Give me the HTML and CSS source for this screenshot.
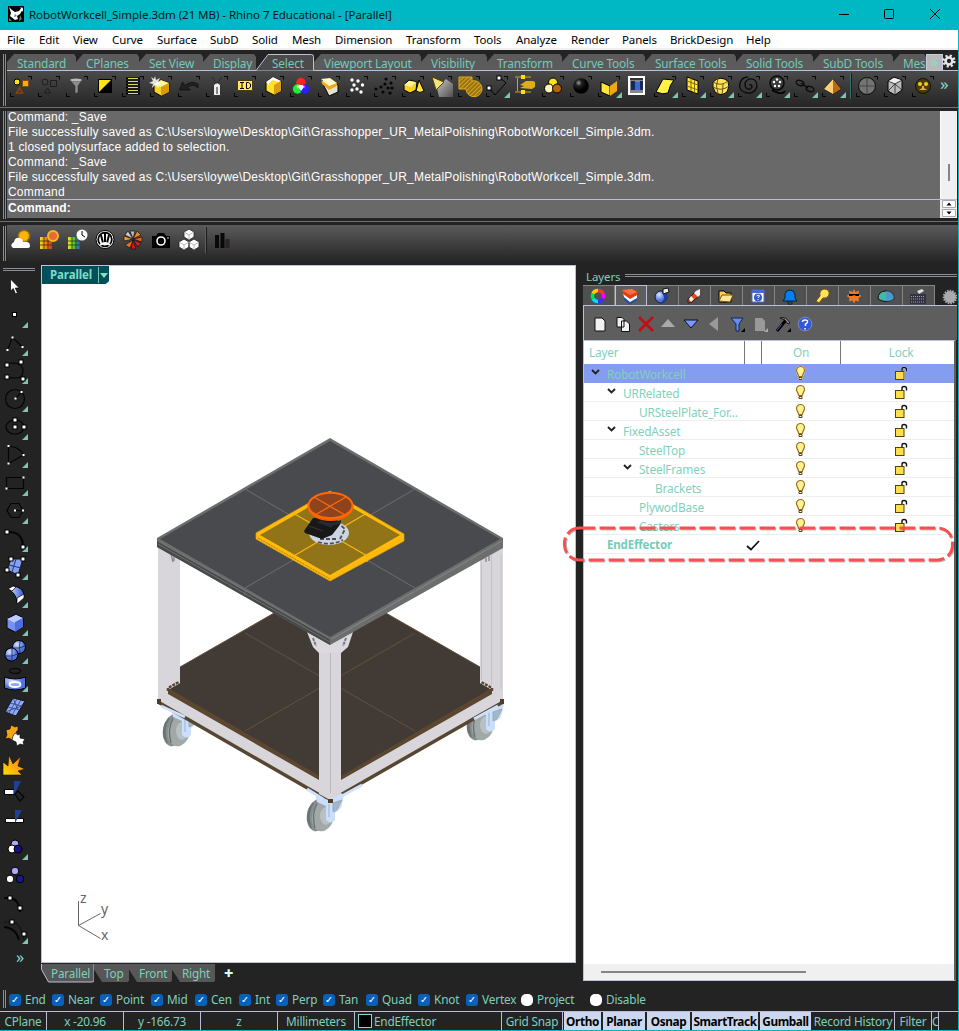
FILE: index.html
```html
<!DOCTYPE html>
<html lang="en">
<head>
<meta charset="utf-8">
<title>RobotWorkcell_Simple.3dm - Rhino 7</title>
<link rel="stylesheet" href="styles.css">
</head>
<body>
<svg class="defs" width="0" height="0">
  <defs>
    <linearGradient id="gSpot" x1="0" y1="0" x2="1" y2="1"><stop offset="0" stop-color="#ddd"/><stop offset="1" stop-color="#555"/></linearGradient>
    <linearGradient id="gBlue" x1="0" y1="0" x2="1" y2="0"><stop offset="0" stop-color="#dfe8ff"/><stop offset="1" stop-color="#3358d0"/></linearGradient>
    <radialGradient id="gBall" cx=".35" cy=".3"><stop offset="0" stop-color="#999"/><stop offset=".4" stop-color="#222"/><stop offset="1" stop-color="#000"/></radialGradient>
    <radialGradient id="gBb" cx=".35" cy=".3"><stop offset="0" stop-color="#dbe5ff"/><stop offset="1" stop-color="#5072de"/></radialGradient>
    <linearGradient id="gFire" x1="0" y1="1" x2="1" y2="0"><stop offset="0" stop-color="#ffe000"/><stop offset=".6" stop-color="#ff9a10"/><stop offset="1" stop-color="#d33b00"/></linearGradient>
    <linearGradient id="gRed" x1="0" y1="0" x2="1" y2="0"><stop offset="0" stop-color="#f5dc20"/><stop offset="1" stop-color="#e03010"/></linearGradient>
    <linearGradient id="gRain" x1="0" y1="0" x2="1" y2="0"><stop offset="0" stop-color="#f4e820"/><stop offset=".5" stop-color="#52c23a"/><stop offset="1" stop-color="#2850d8"/></linearGradient>
    <pattern id="hatch" width="3" height="3" patternUnits="userSpaceOnUse" patternTransform="rotate(45)"><rect width="3" height="3" fill="#8b6a14"/><rect width="1.300" height="3" fill="#d8a417"/></pattern>
    <g id="marks"><path d="M21 4.500h3.500v3" fill="none" stroke="#050505"/><path d="M3.500 21v3.500h3.500" fill="none" stroke="#050505"/></g>
    <path id="tri" d="M27 20v6h-6z" fill="#7cc4b4"/>
    <path id="ltri" d="M28 22v6h-6z" fill="#7cc4b4"/>
    <rect id="sq" x="-2" y="-2" width="4" height="4" fill="#fff" stroke="#000"/>
    <rect id="pt" x="-1" y="-1" width="2" height="2" fill="#fff"/>
    <g id="ycube"><path d="M7 12l7-4 8 3v9l-8 4-7-4z" fill="#f5d327" stroke="#000"/><path d="M7 12l7-4 8 3-8 4z" fill="#fff59a"/><path d="M14 15l8-4v9l-8 4z" fill="#d89a13"/></g>
    <g id="bulb"><path d="M6 12.500h3v2h-3z" fill="#fff" stroke="#5c4412"/><path d="M7.500 1.500a4 4 0 0 1 4 4c0 2-1.700 3-2.200 6h-3.600c-.5-3-2.200-4-2.200-6a4 4 0 0 1 4-4z" fill="#fdf393" stroke="#9a6e18" stroke-width="1.200"/></g>
    <g id="lock"><path d="M8 6v-3q0-1.500 2-1.500 2.500 0 2.500 2v2" fill="none" stroke="#111" stroke-width="1.400"/><rect x="1.500" y="5.500" width="8.500" height="8" fill="#fbe04a" stroke="#54400a"/></g>
    <path id="chev" d="M1 3l3.500 3.500L8 3" fill="none" stroke="#222" stroke-width="1.900"/>
    <g id="cast">
      <ellipse cx="-8" cy="6" rx="11" ry="16.500" transform="rotate(12 -8 6)" fill="#858d8e"/>
      <ellipse cx="-3" cy="7" rx="11" ry="15.500" transform="rotate(12 -3 7)" fill="#a0a8a8"/>
      <path d="M-13-6q-7 11-2 25M-16-2q-4 9-1 17M-9-5q-6 10-2 24" stroke="#6a7274" fill="none" stroke-width="1.400"/>
      <ellipse cx="0" cy="7" rx="6" ry="9" fill="#b7c0c2"/>
      <path d="M-11-15l13 6 13-7 3 2-3 13-6 5v7q-4 5-9 0V-3l-9-4z" fill="#cbdffa"/>
      <path d="M3-5v13M7-6l9-3-5 10-4 2z" stroke="#8fa5bd" fill="#a5b6c6" stroke-width=".8"/>
    </g>
  </defs>
</svg>
<div class="window">
  <header class="title">
    <svg width="16" height="16" viewBox="0 0 16 16"><path d="M0 0h16v16H0z"/><path d="M1 1l2 6-1 3 5 4 3-1-1-3 3-2 3-5-1-2-3 4-4 1-3-2z" fill="#fff"/><path d="M7 8l2 2-3 1zM12 9l2 4-3 2zM1 12l3 3H1z" fill="#777"/><path d="M12 1l3 2v3z" fill="#fff"/></svg>
    <span class="caption">RobotWorkcell_Simple.3dm (21 MB) - Rhino 7 Educational - [Parallel]</span>
    <svg width="110" height="12" viewBox="0 0 110 12" fill="none" stroke="#000"><path d="M1 6.500h10"/><rect x="46.500" y="1.500" width="9" height="9" rx="1"/><path d="M92 1l10 10M102 1l-10 10"/></svg>
  </header>
  <nav class="menu"><span>File</span><span>Edit</span><span>View</span><span>Curve</span><span>Surface</span><span>SubD</span><span>Solid</span><span>Mesh</span><span>Dimension</span><span>Transform</span><span>Tools</span><span>Analyze</span><span>Render</span><span>Panels</span><span>BrickDesign</span><span>Help</span></nav>

  <section class="ribbon">
    <i class="grip"></i>
    <div class="ribbon-body">
      <div class="tabs">
        <span>Standard</span><span>CPlanes</span><span>Set View</span><span>Display</span><span class="sel"><svg width="60" height="17" viewBox="0 0 60 17"><path d="M0 16.500L12 .5h43.500q2 0 2 2v14" fill="#4b4b4b" stroke="#b9bfdc"/></svg><b>Select</b></span><span>Viewport Layout</span><span>Visibility</span><span>Transform</span><span>Curve Tools</span><span>Surface Tools</span><span>Solid Tools</span><span>SubD Tools</span><span>Mes</span><em>»</em>
        <svg class="gear" width="14" height="14" viewBox="0 0 14 14"><circle cx="7" cy="7" r="5.300" fill="none" stroke="#e8e8e8" stroke-width="2.600" stroke-dasharray="2.100 2.060"/><circle cx="7" cy="7" r="3.400" fill="none" stroke="#e8e8e8" stroke-width="2.500"/></svg>
      </div>
      <div class="tools">
        <svg viewBox="0 0 28 28"><use href="#marks"/><circle cx="10" cy="10" r="3" fill="#ffe414" stroke="#000"/><path d="M15.500 8.500h6v6h-6z" fill="#f0b010" stroke="#8a4a08"/><path d="M9.500 21l3-5 3 5z" fill="none" stroke="#8a440e" stroke-width="1.500"/></svg>
        <svg viewBox="0 0 28 28"><use href="#marks"/><g fill="none" stroke="#1d1d1d"><circle cx="10" cy="10" r="3"/><path d="M15.500 8.500h6v6h-6zM9.500 21l3-5 3 5z"/></g></svg>
        <svg viewBox="0 0 28 28"><use href="#marks"/><path d="M7 8q6 3 12 0l-4 6v7h-3v-7z" fill="#8d8d8d" stroke="#333" stroke-width=".6"/><ellipse cx="13" cy="8" rx="6" ry="1.500" fill="#bbb"/></svg>
        <svg viewBox="0 0 28 28"><use href="#marks"/><path d="M7.500 7.500h13v13h-13z" fill="#ffe414" stroke="#000"/><path d="M21 7v14H7z"/></svg>
        <svg viewBox="0 0 28 28"><use href="#marks"/><path d="M7 6.500h14M7 9.500h14M7 12.500h14M7 15.500h14M7 18.500h14M7 21.500h14" stroke="#000" stroke-width="2"/><path d="M9 6.500h10M9 12.500h10M9 18.500h10" stroke="#e8d44a"/><path d="M9 9.500h10M9 15.500h10M9 21.500h10" stroke="#ccc"/></svg>
        <svg viewBox="0 0 28 28"><use href="#marks"/><use href="#ycube"/><path d="M8 4l1 4 4-2-2 4 4 1-4 1 1 4-4-3-3 3 1-4-4-1 4-2-2-4 3 2z" fill="#fff" opacity=".85"/></svg>
        <svg viewBox="0 0 28 28"><use href="#marks"/><path d="M4.500 18l3-8 2.500 3.500q6-5.500 13-1.500v4q-5-5-10.500-.5l3 2.500z" fill="#222" stroke="#080808" stroke-width=".6"/></svg>
        <svg viewBox="0 0 28 28"><use href="#marks"/><path d="M10.500 13l3.500-3 3.500 3v10.500h-7z" fill="#eee" stroke="#333"/><path d="M9 5l5 7 5-7" fill="none" stroke="#111" stroke-dasharray="1 1"/><path d="M13 15h2v7h-2z" fill="#888"/></svg>
        <svg viewBox="0 0 28 28"><use href="#marks"/><path d="M6.500 8.500h15v10h-15z" fill="#ffe85a" stroke="#4b3d08"/><path d="M9 10.500h4M11 10.500v6M9 16.500h4M15.500 10.500v6h2l2-1.500v-3l-2-1.500z" fill="none" stroke="#000"/></svg>
        <svg viewBox="0 0 28 28"><use href="#marks"/><path d="M7 10l7-5 8 4v10l-7 4-8-4z" fill="#ffe02c" stroke="#000"/><path d="M7 10l7-5 8 4-3 1-5-2-4 3v2z" fill="#fff"/><path d="M15 13l7-4v10l-7 4z" fill="#d99b12"/></svg>
        <svg viewBox="0 0 28 28"><use href="#marks"/><circle cx="14" cy="10.500" r="4.700" fill="#f22"/><circle cx="10.500" cy="17" r="4.700" fill="#2e3"/><circle cx="17.500" cy="17" r="4.700" fill="#22f"/><path d="M11.500 13l-2 1 1 3z" fill="#fe2"/><path d="M16.500 13l2 1-1 3z" fill="#f2f"/><path d="M12 13h4l1 2-3 4-3-4z" fill="#fff"/></svg>
        <svg viewBox="0 0 28 28"><use href="#marks"/><path d="M6 8l14 2 3 3v7l-9 4z" fill="#e7e1cf" stroke="#000"/><path d="M6 7l9-1 7 5-8 3z" fill="#fff6c9"/><path d="M6 8l8 6 8-3v3l-8 4-7-6z" fill="#f1a91c"/></svg>
        <svg viewBox="0 0 28 28"><use href="#marks"/><g fill="#fff"><circle cx="9" cy="8" r="1.700"/><circle cx="15" cy="9" r="1.700"/><circle cx="11" cy="13" r="1.700"/><circle cx="19.500" cy="13" r="1.700"/><circle cx="9" cy="18" r="1.700"/><circle cx="14" cy="17" r="1.700"/><circle cx="18" cy="20" r="1.700"/></g></svg>
        <svg viewBox="0 0 28 28"><use href="#marks"/><g fill="#050505"><circle cx="15" cy="7" r="1.600"/><circle cx="20" cy="11" r="1.600"/><circle cx="14" cy="12" r="1.600"/><circle cx="10" cy="15" r="1.600"/><circle cx="5" cy="17" r="1.600"/><circle cx="17" cy="16" r="1.600"/><circle cx="21" cy="16" r="1.600"/><circle cx="12" cy="20" r="1.600"/><circle cx="19" cy="21" r="1.600"/></g></svg>
        <svg viewBox="0 0 28 28"><use href="#marks"/><path d="M5 13l5-5 8 2-1 8-6 3-6-3z" fill="#f7cf27" stroke="#000"/><path d="M5 13l5-4 7 1-5 5z" fill="#fff49a"/><path d="M20 8l5 11q-4 3-8 0z" fill="#ffe43c" stroke="#000"/></svg>
        <svg viewBox="0 0 28 28"><use href="#marks"/><path d="M10 16l9-9 7 5v13H12z" fill="url(#gSpot)" opacity=".85"/><path d="M5 5l12 5-8 8z" fill="#f4e27a" stroke="#554000"/></svg>
        <svg viewBox="0 0 28 28"><use href="#marks"/><path d="M4 5h13v4a8 8 0 1 1-6 8H4z" fill="url(#hatch)" stroke="#e4ac16"/></svg>
        <svg viewBox="0 0 28 28"><use href="#marks"/><path d="M6 16l6 7 11-12-7-6" fill="none" stroke="#050505"/><use href="#sq" x="16" y="6"/><use href="#sq" x="6" y="16"/><use href="#tri"/></svg>
        <svg viewBox="0 0 28 28"><path d="M4 5h16M4 20h16M6.500 6v13" stroke="#d6a315"/><path d="M10 3h4v4h-4zM10 18h4v4h-4z" fill="#ffdc20"/><path d="M9 13l6-4h7l2 1v5l-3 2-12-1 4-2z" fill="#dfac1a"/></svg>
        <svg viewBox="0 0 28 28"><use href="#marks"/><circle cx="14" cy="10.500" r="4.500" fill="#ffe312" stroke="#000"/><circle cx="10" cy="16.500" r="4.500" fill="#fff5bb" stroke="#000"/><circle cx="18" cy="16.500" r="4.500" fill="#b46509" stroke="#000"/></svg>
        <svg viewBox="0 0 28 28"><use href="#marks"/><circle cx="14" cy="14" r="7.800" fill="url(#gBall)"/></svg>
        <svg viewBox="0 0 28 28"><use href="#marks"/><path d="M6 10l9 4v10l-9-4z" fill="#ffe43a" stroke="#000"/><path d="M15 14l7-5v10l-7 5z" fill="#f2a713"/><use href="#tri"/></svg>
        <svg viewBox="0 0 28 28"><path d="M6 5h15v17H6z" fill="#888" stroke="#fff" stroke-width="2"/><path d="M9 10h9v8H9z" fill="#376bd0"/><path d="M8 9h4v9H8zM17 9h3v9h-3z" fill="#16265e"/><path d="M7 6h13v2H7z" fill="#333"/></svg>
        <svg viewBox="0 0 28 28"><use href="#marks"/><path d="M5 20l7-13 11 1q-4 4-6 13-5 2-12-1z" fill="#fff04b" stroke="#000"/><use href="#tri"/></svg>
        <svg viewBox="0 0 28 28"><use href="#marks"/><path d="M8 5l11 4v13L8 18z" fill="#ffea35" stroke="#000"/><path d="M8 9l11 4M8 14l11 4M12 6v13M15.500 8v13" stroke="#836612"/><use href="#tri"/></svg>
        <svg viewBox="0 0 28 28"><use href="#marks"/><path d="M6 10q7-7 15-1 2 6-1 11-6 5-12 0-3-5-2-10z" fill="#fae25a" stroke="#000"/><path d="M6 10q8 5 15-1M6 15q8 5 16-1M11 6q-3 8 0 16M16 12q0 5-1 10" fill="none" stroke="#715611"/><use href="#tri"/></svg>
        <svg viewBox="0 0 28 28"><use href="#marks"/><path d="M14 13q3-1 3 2-2 4-6 1-3-6 3-9 8-1 8 7-2 8-10 7-9-2-7-10 2-6 8-6" fill="none" stroke="#0a0a0a" stroke-width="1.300"/><use href="#tri"/></svg>
        <svg viewBox="0 0 28 28"><use href="#marks"/><circle cx="14" cy="11" r="7" fill="none" stroke="#080808" stroke-width="1.500"/><g fill="#fff"><circle cx="14" cy="7.500" r="1.200"/><circle cx="11" cy="10" r="1.200"/><circle cx="17" cy="10" r="1.200"/><circle cx="12" cy="14" r="1.200"/><circle cx="16" cy="14" r="1.200"/></g><path d="M9 18q10 6 13 1" fill="none" stroke="#000" stroke-width="1.500"/><use href="#tri"/></svg>
        <svg viewBox="0 0 28 28"><use href="#marks"/><g fill="none" stroke="#0a0a0a" stroke-width="1.300"><ellipse cx="9" cy="11" rx="4" ry="2.500" transform="rotate(20 9 11)"/><path d="M10 11l7 5"/><ellipse cx="19" cy="17" rx="4" ry="2.500" transform="rotate(20 19 17)"/></g><use href="#tri"/></svg>
        <svg viewBox="0 0 28 28"><use href="#marks"/><path d="M5 17l9-10 8 10-8 5z" fill="#f3c055" stroke="#000"/><path d="M14 7l8 10-8 5z" fill="#b96a18"/><path d="M5 17l9-10v15z" fill="#ffce78"/><use href="#tri"/></svg>
        <i class="vsep"></i>
        <svg viewBox="0 0 28 28"><use href="#marks"/><circle cx="14" cy="14" r="8.500" fill="#747474" stroke="#050505"/><path d="M14 5.500v17M5.500 14h17" stroke="#444"/></svg>
        <svg viewBox="0 0 28 28"><use href="#marks"/><path d="M7 9l6-4 8 3v10l-7 5-7-4z" fill="#bbb" stroke="#000"/><path d="M7 9l7 3 7-4M14 12v11M7 19l7-7 7 6" fill="none" stroke="#222" stroke-width=".8"/><path d="M8 9l5-3 7 2-6 3z" fill="#eee"/></svg>
        <svg viewBox="0 0 28 28"><use href="#marks"/><circle cx="14" cy="14" r="7.500" fill="#4a3b0a" stroke="#111"/><circle cx="11" cy="12" r="2" fill="#f3cf1b"/><circle cx="17" cy="12" r="2" fill="#f3cf1b"/><path d="M13 14h2v2l3 2h-8l3-2z" fill="#e5b716"/></svg>
        <em>»</em>
      </div>
    </div>
  </section>

  <section class="command">
    <i class="grip"></i>
    <div class="history"><p>Command: _Save</p><p>File successfully saved as C:\Users\loywe\Desktop\Git\Grasshopper_UR_MetalPolishing\RobotWorkcell_Simple.3dm.</p><p>1 closed polysurface added to selection.</p><p>Command: _Save</p><p>File successfully saved as C:\Users\loywe\Desktop\Git\Grasshopper_UR_MetalPolishing\RobotWorkcell_Simple.3dm.</p><p>Command</p></div>
    <div class="track"><i></i></div>
    <div class="prompt">Command:</div>
    <div class="spin"><svg width="14" height="18" viewBox="0 0 14 18"><path d="M.5.500h13v7H.5zM.5 9.500h13v7H.5z" fill="#fff" stroke="#aaa"/><path d="M4.500 5.500l2.500-3 2.500 3zM4.500 11.500l2.500 3 2.500-3z"/></svg></div>
  </section>

  <section class="toolbar2">
    <i class="grip"></i>
    <div class="tools">
      <svg viewBox="0 0 28 28"><circle cx="17" cy="10" r="5.500" fill="#ffb400" stroke="#a67000" stroke-dasharray="1 1" stroke-width="2"/><path d="M6 22q-4-3 1-6 1-5 6-4 3 1 3 4 7-1 7 4 0 2-2 2z" fill="#fff"/></svg>
      <svg viewBox="0 0 28 28"><path d="M5 11h12v12H5z" fill="url(#gRed)"/><path d="M5 15h12M5 19h12M9 11v12M13 11v12" stroke="#4a2a08" stroke-width=".8"/><circle cx="18" cy="10" r="5" fill="#e76b38" stroke="#f2ba22" stroke-width="2"/></svg>
      <svg viewBox="0 0 28 28"><path d="M5 11h12v12H5z" fill="url(#gRain)"/><path d="M5 15h12M5 19h12M9 11v12M13 11v12" stroke="#243c12" stroke-width=".8"/><circle cx="19" cy="9" r="5.500" fill="#fff"/><path d="M19 5v4l3 2" fill="none" stroke="#000"/></svg>
      <svg viewBox="0 0 28 28"><circle cx="14" cy="13.500" r="9" fill="#fff" stroke="#000"/><circle cx="14" cy="13.500" r="6.800" fill="none" stroke="#000" stroke-width="1.800"/><path d="M14 7v10M10 9l2 8M18 9l-2 8" stroke="#000" stroke-width="2"/><path d="M9 19q5-4 10 0" fill="none" stroke="#fff" stroke-width="2"/></svg>
      <svg viewBox="0 0 28 28"><g stroke="#111" stroke-width=".7"><path d="M14 13L11 5h5z" fill="#bbb"/><path d="M14 13l4-8 4 4z" fill="#f28617"/><path d="M14 13l9-2v5z" fill="#f15b12"/><path d="M14 14l8 3-3 4z" fill="#de1f1f"/><path d="M14 14l3 9h-5z" fill="#f20c0c"/><path d="M14 14l-3 8-5-3z" fill="#f26c12"/><path d="M14 13l-9 2v-5z" fill="#f49b38"/><path d="M14 13L6 9l3-4z" fill="#ccc"/></g></svg>
      <svg viewBox="0 0 28 28"><path d="M5 10h4l2-3h6l2 3h4v12H5z"/><circle cx="14" cy="15" r="4" fill="none" stroke="#fff" stroke-width="1.600"/><circle cx="21" cy="12" r=".8" fill="#fff"/></svg>
      <svg viewBox="0 0 28 28"><g fill="#fff" stroke="#222" stroke-width=".8"><path d="M14 3l5 3v5l-5 3-5-3V6zM9 13l5 3v5l-5 3-5-3v-5zM19 13l5 3v5l-5 3-5-3v-5z"/><path d="M9 6l5 3 5-3M14 9v5M4 16l5 3 5-3M9 19v5M14 16l5 3 5-3M19 19v5" fill="none" stroke="#aaa"/></g></svg>
      <i class="vsep"></i>
      <svg viewBox="0 0 28 28"><path d="M7 9h4v13H7zM12.500 7h4v15h-4z" fill="#080808"/><path d="M17.500 13h4v9h-4z" fill="#2a2424"/></svg>
    </div>
  </section>

  <main>
    <aside class="left">
      <i class="hgrip"></i>
      <svg viewBox="0 0 28 28"><path d="M10.500 7v12l2.800-2.500L15.500 22l2-1-2.200-5h4z" fill="#fff" stroke="#000" stroke-width=".7"/></svg>
      <svg viewBox="0 0 28 28"><use href="#sq" x="14.500" y="14.500"/><use href="#ltri"/></svg>
      <svg viewBox="0 0 28 28"><path d="M7.500 22l5-12.500L22.500 19" class="ln"/><use href="#pt" x="7.500" y="22"/><use href="#pt" x="12.500" y="9.500"/><use href="#pt" x="22.500" y="19"/><use href="#ltri"/></svg>
      <svg viewBox="0 0 28 28"><path d="M7 9q0-2 8-2 7 1 8 7 0 8-7 8-9 0-9-1" class="ln"/><use href="#sq" x="7" y="9"/><use href="#sq" x="21" y="6"/><use href="#sq" x="7" y="21"/><use href="#ltri"/><use href="#sq" x="23" y="23"/></svg>
      <svg viewBox="0 0 28 28"><circle cx="15" cy="15" r="9.500" class="ln"/><path d="M15.500 14.500l6-6.500" class="ln"/><use href="#pt" x="15.500" y="14.500"/><use href="#pt" x="21.500" y="8"/><use href="#ltri"/></svg>
      <svg viewBox="0 0 28 28"><ellipse cx="15" cy="15" rx="9" ry="7" class="ln"/><use href="#sq" x="15" y="8"/><use href="#sq" x="15" y="15"/><use href="#sq" x="24" y="15"/><use href="#ltri"/></svg>
      <svg viewBox="0 0 28 28"><path d="M8.500 23.500V6Q20 7 23.500 15z" class="ln"/><use href="#pt" x="8.500" y="6"/><use href="#pt" x="8.500" y="23.500"/><use href="#pt" x="23.500" y="15"/><use href="#ltri"/></svg>
      <svg viewBox="0 0 28 28"><path d="M6.500 9.500h17v11h-17z" class="ln"/><use href="#pt" x="23.500" y="9.500"/><use href="#pt" x="6.500" y="20.500"/><use href="#ltri"/></svg>
      <svg viewBox="0 0 28 28"><path d="M7 14.500l4-7h8l4 7-4 7h-8zM15 14.500h8" class="ln"/><use href="#pt" x="15" y="14.500"/><use href="#pt" x="23" y="14.500"/><use href="#ltri"/></svg>
      <svg viewBox="0 0 28 28"><path d="M7 8q16-1 16 15" class="ln thick"/><use href="#sq" x="7" y="8"/><use href="#ltri"/><use href="#sq" x="23" y="23"/></svg>
      <svg viewBox="0 0 28 28"><path d="M11 7h12l-5 16-11-5z" fill="#86a0f2" stroke="#111"/><path d="M9 13l12 3M16 7l-4 13" stroke="#22357c"/><use href="#sq" x="11" y="7"/><use href="#sq" x="23" y="7"/><use href="#sq" x="7" y="18"/><use href="#sq" x="18" y="23"/><use href="#ltri"/></svg>
      <svg viewBox="0 0 28 28"><path d="M8 9l5-3q9 1 11 8l-7 8q-1-9-9-13z" fill="url(#gBlue)" stroke="#000"/><path d="M8 9l5-3 3 1-4 4zM17 18l7-4v4l-7 6z" fill="#fff" stroke="#000" stroke-width=".7"/><use href="#ltri"/></svg>
      <svg viewBox="0 0 28 28"><path d="M7 11l9-5 7 4v9l-8 5-8-4z" fill="#7590f8" stroke="#000"/><path d="M7 11l9-4 7 3-8 5z" fill="#bccbff"/><path d="M15 14l8-4v9l-8 5z" fill="#4d6ddc"/><use href="#ltri"/></svg>
      <svg viewBox="0 0 28 28"><circle cx="19" cy="11" r="6.500" fill="url(#gBb)" stroke="#000"/><circle cx="11.500" cy="18.500" r="6.500" fill="url(#gBb)" stroke="#000"/><path d="M12 12v13M5 20q6 1 13-2M20 5q-1 6 0 12M13 12q6 1 12-2" fill="none" stroke="#18265b" stroke-width=".8"/><use href="#ltri"/></svg>
      <svg viewBox="0 0 28 28"><ellipse cx="15" cy="7" rx="5.500" ry="2.500" class="ln"/><path d="M4.500 13q10.500 4 21 0v11q-10.500 4-21 0z" fill="url(#gBb)" stroke="#000"/><ellipse cx="15" cy="20.500" rx="5.500" ry="2.500" fill="#8fa8f4" stroke="#fff" stroke-width="1.800"/><use href="#ltri"/></svg>
      <svg viewBox="0 0 28 28"><path d="M13 6l12 3-9 15-11-4z" fill="#91a9f1" stroke="#111"/><path d="M10 11l12 3M8 15l12 3M17 7L9 21M21 8l-9 15M13 6l5 12M5 20l17-6" stroke="#30458d" fill="none" stroke-width=".8"/><use href="#ltri"/></svg>
      <svg viewBox="0 0 28 28"><path d="M6 10l4-1 1-4 4 2 3-1v4l-2 2 2 3-4 1-2 4-3-2-4 1 2-4z" fill="#f9a512" stroke="#000" stroke-width=".6"/><path d="M13 16l2-3 3 2 2-1v4l5 1-2 3 1 3-4-1-3 2-1-4-4-2z" fill="#fff" stroke="#000" stroke-width=".6"/></svg>
      <svg viewBox="0 0 28 28"><path d="M3 27V14l5 4 1-11 4 9L21 8l-3 10 7 3-7 2 4 4z" fill="url(#gFire)" stroke="#111" stroke-width=".6"/></svg>
      <svg viewBox="0 0 28 28"><path d="M4.500 13.500H14v5H4.500z" fill="#fff" stroke="#000"/><path d="M14 5h7l-7 14z" fill="#213f94"/><path d="M15 18l3-3 6 6-4 4z" class="ln"/></svg>
      <svg viewBox="0 0 28 28"><path d="M5.500 14.500h18v4h-18z" fill="#fff" stroke="#000"/><path d="M15 6h7l-7 13z" fill="#213f94"/></svg>
      <svg viewBox="0 0 28 28" stroke="#000"><circle cx="15" cy="12" r="4" fill="#aaa9fa"/><circle cx="12" cy="17" r="4" fill="#fff"/><circle cx="18" cy="17" r="4" fill="#151282"/><path d="M28 22v6h-6z" fill="#7cc4b4" stroke="none"/></svg>
      <svg viewBox="0 0 28 28" stroke="#000"><circle cx="15" cy="11" r="3.800" fill="#aaa9fa"/><circle cx="10" cy="19" r="3.800" fill="#fff"/><circle cx="20" cy="19" r="3.800" fill="#1b1889"/></svg>
      <svg viewBox="0 0 28 28"><path d="M4 10h6q9 1 10 14" class="ln thick"/><use href="#sq" x="10" y="10"/><use href="#sq" x="20" y="20"/></svg>
      <svg viewBox="0 0 28 28"><path d="M4 11q12 1 15 13" class="ln thick"/><path d="M4 6h8q9 1 12 18" class="ln" stroke-dasharray="1 1"/><use href="#sq" x="12" y="6"/><use href="#sq" x="24" y="18"/><use href="#ltri"/></svg>
      <em>»</em>
    </aside>

    <section class="view">
      <div class="canvas">
        <div class="vlabel"><b>Parallel</b><svg width="11" height="18" viewBox="0 0 11 18"><path d="M.5 1v16" stroke="#7cc4b4"/><path d="M2 7h8l-4 5z" fill="#8fdcca"/></svg></div>
        <svg class="scene" width="533" height="696" viewBox="42 266 533 696">
          <use href="#cast" x="182" y="724"/><use href="#cast" x="486" y="718"/>
          <path d="M330 581L480 667v16l12 7L330 791 168 690l12-7v-16z" fill="#423a35"/>
          <path d="M158 545h22v138l-12 6v12h-10zM480 545h23v155h-11v-12l-12-6z" fill="#d9d6db"/>
          <path d="M491.500 555v130M481.500 562v118M501 555v145" stroke="#c3c0c6"/>
          <path d="M180 667L330 581 480 667M245 633l170 98M415 633L245 731" stroke="#66503a" fill="none"/>
          <path d="M168 688L320 776v7l-152-88zM492 688L341 776v7l151-88z" fill="#5b4630"/>
          <path d="M168 691v-3l11-6M492 691v-3l-11-6" fill="none" stroke="#5b4630" stroke-width="2.500" stroke-dasharray="3 1"/>
          <path d="M168 694l151 86h22l151-86 11-6v12L330 800 158 700v-12z" fill="#d9d6db"/>
          <path d="M158 702L330 801 503 702" fill="none" stroke="#564632" stroke-width="3.500"/>
          <path d="M157 699h4v5h-4zM500 699h4v5h-4z" fill="#4d3d2b"/>
          <use href="#cast" x="326" y="809"/>
          <path d="M161 706l24 11M498 706l-24 13M307 789l16 10M362 785l-24 13" stroke="#cfe1fb" stroke-width="3"/>
          <path d="M319 640h22v153l-11 7-11-6z" fill="#d9d6db"/><path d="M330.500 646v147" stroke="#bab7bd"/><path d="M328 799h5v4h-5z" fill="#4d3d2b"/>
          <path d="M307 632l23 12 23-12-5 15-7 6h-22l-6-6z" fill="#dbd9de"/><path d="M313 638l3 8M346 638l-3 8" stroke="#777" stroke-width="2" stroke-dasharray="3 1"/>
          <path d="M171 554l2 8M174 556v5M489 556v5M486 558v4" fill="none" stroke="#8e8b91" stroke-width="1.500"/>
          <path d="M330 438L503 538v10L330 645 157 547v-9z" fill="#6c6e6e"/>
          <path d="M330 441L500 539 330 637 160 539z" fill="#494a4e"/>
          <path d="M157 541l173 98v6L157 547z" fill="#484a4a"/><path d="M158 541l172 98M158 544l172 98" stroke="#777a77" stroke-width=".8"/><path d="M332 639l170-98" stroke="#888" stroke-width="1"/>
          <path d="M245 489l170 99v7M415 489L245 588v7" fill="none" stroke="#6b6e70"/>
          <path d="M330 491L404 534v7L330 581 256 539v-6z" fill="#ffba0b" stroke="#e7a008" stroke-width=".7"/>
          <path d="M330 495L400 535 330 575 260 535z" fill="#927418"/><path d="M293 513l76 44M367 513l-75 44M293 560l-1-4M367 562v-4" stroke="#f7b811" stroke-width="1.200"/>
          <path d="M258 538l72 41" stroke="#a77d13" stroke-dasharray="2 1"/>
          <ellipse cx="329" cy="533" rx="20" ry="12" fill="#cdd5e2"/><path d="M318 542q13 4 25-2M337 522l8 7-5 10M320 539h18" fill="none" stroke="#4b4e55" stroke-width="1.800" stroke-dasharray="4 2"/>
          <path d="M304 531l9-13 16-1 12 5-2 4-7 9-10 4-17-6z" fill="#181818"/><path d="M309 526l14 5M318 522l14 5" stroke="#333" stroke-width="1.200"/>
          <path d="M320 520q10 5 21 0v3q-10 6-21 0z" fill="#2a2a2a"/>
          <ellipse cx="330.500" cy="507" rx="23" ry="14" fill="#ef6006"/><ellipse cx="330.500" cy="505.500" rx="22" ry="12.700" fill="#8d431d" stroke="#ff6808" stroke-width="2"/>
          <path d="M314 497l31 18M346 497l-31 18" stroke="#ff6808" stroke-width="1.300"/>
          <path d="M78.500 901v24.500l22 13M78.500 925.500l22-12" fill="none" stroke="#666"/>
          <g class="axis"><text x="80" y="903">z</text><text x="101" y="914">y</text><text x="101" y="940">x</text></g>
        </svg>
      </div>
      <div class="vtabs"><span class="sel"><svg width="53" height="19" viewBox="0 0 53 19"><path d="M.5 0v5.500l7 12.500h44q1.500 0 1.500-2V0" fill="#575757" stroke="#bcc0dc"/></svg><b>Parallel</b></span><span>Top</span><span>Front</span><span>Right</span><strong>+</strong></div>
    </section>

    <section class="panel">
      <h2>Layers<i></i></h2>
      <div class="ptabs">
        <span><svg viewBox="0 0 20 20"><g fill="none" stroke-width="3.500"><path d="M10 4.500a5.500 5.500 0 0 1 5 3" stroke="#f33"/><path d="M15 7.500a5.500 5.500 0 0 1 0 5" stroke="#f0f"/><path d="M15 12.500a5.500 5.500 0 0 1-5 3" stroke="#33f"/><path d="M10 15.500a5.500 5.500 0 0 1-5-3" stroke="#0df"/><path d="M5 12.500a5.500 5.500 0 0 1 0-5" stroke="#0e3"/><path d="M5 7.500a5.500 5.500 0 0 1 5-3" stroke="#fc0"/></g></svg></span>
        <span class="on"><svg viewBox="0 0 20 20"><path d="M3 9l7 6 7-4v3l-7 5-6-5z" fill="#284f9e"/><path d="M3 7l7 5 7-3v3l-7 4-6-5z" fill="#fff"/><path d="M2 4l10-1 5 3v3l-7 4-7-5z" fill="#e53c13"/><path d="M2 4l10-1 5 3-7 3z" fill="#ff7143"/></svg></span>
        <span><svg viewBox="0 0 20 20"><circle cx="9" cy="11" r="6" fill="url(#gBb)" stroke="#123"/><path d="M9 5a6 6 0 0 1 0 12q6-5 0-12z" fill="#1c3fa8"/><path d="M11 3l5-1 1 4-6 2z" fill="#eee" stroke="#111"/></svg></span>
        <span><svg viewBox="0 0 20 20"><path d="M4 13l7-7 4 4-7 6-4 1z" fill="#e1461c" stroke="#222"/><path d="M12 5l4-2v6l-2 2-4-4zM7 10l3 3-3 3-2-3z" fill="#eee"/></svg></span>
        <span><svg viewBox="0 0 20 20"><path d="M3 5h5l2 2h5v9H3z" fill="#ffd34c" stroke="#000"/><path d="M3 15l3-6h11l-3 7z" fill="#ffe996" stroke="#705010"/></svg></span>
        <span><svg viewBox="0 0 20 20"><path d="M4 4h12v12H4z" fill="#fff" stroke="#4a6ccb"/><path d="M4 4h12v3H4z" fill="#456bd0"/><circle cx="10" cy="11.500" r="4" fill="#345bcb"/><path d="M8.500 10q3-2 3 0l-1.500 2M10 13v1" fill="none" stroke="#fff"/></svg></span>
        <span><svg viewBox="0 0 20 20"><path d="M3 15l2-3V8q1-4 5-4 4 0 5 4v4l2 3zM8 16h4v2H8z" fill="#087ff0" stroke="#023"/></svg></span>
        <span><svg viewBox="0 0 20 20"><path d="M12 3q6 0 5 6-2 4-6 3l-4 5-3-2 4-5Q7 4 12 3z" fill="#ffe35a" stroke="#775008"/></svg></span>
        <span><svg viewBox="0 0 20 20"><path d="M10 3l1.500 3L15 4.500 14.500 8l3 2-3 2 .5 3.500-3.500-1-1.500 3-1.500-3-3.500 1 .5-3.500-3-2 3-2L5 4.500 8.500 6z" fill="#f07928"/><path d="M5 8h10v2h-3l-2-1-2 1H5z"/></svg></span>
        <span><svg viewBox="0 0 20 20"><path d="M2 13q0-8 8-8t8 8q-8 5-16 0z" fill="#45b7a8" stroke="#111"/><path d="M10 5q8 0 8 8-4 3-8 2z" fill="#4a8fdc" opacity=".7"/></svg></span>
        <span><svg viewBox="0 0 20 20"><path d="M2 8h16v10H2z" fill="#334"/><path d="M3 10.500h14M3 13h14M3 16h14" stroke="#73b7a8" stroke-dasharray="1 1"/><path d="M9 5l5-2 2 2-5 3z" fill="#ddd"/></svg></span>
        <svg class="pgear" viewBox="0 0 20 20"><circle cx="10" cy="10" r="6" fill="#aaa"/><circle cx="10" cy="10" r="6.300" fill="none" stroke="#aaa" stroke-width="2" stroke-dasharray="1.500 1.100"/></svg>
      </div>
      <div class="ptools">
        <svg viewBox="0 0 20 20"><path d="M5 4h7l3 3v10H5z" fill="#f2f2f2" stroke="#111"/></svg>
        <svg viewBox="0 0 20 20"><path d="M4 3.500h5l2 2v7.500H4zM8.500 7h5l3 3v7.500h-8z" fill="#f2f2f2" stroke="#111"/></svg>
        <svg viewBox="0 0 20 20"><path d="M3 3l14 14M17 3L3 17" stroke="#c80b12" stroke-width="2.500"/></svg>
        <svg viewBox="0 0 20 20"><path d="M3 13l7-8 7 8z" fill="#aaa"/></svg>
        <svg viewBox="0 0 20 20"><path d="M3 6h14l-7 8z" fill="#7998ff" stroke="#111"/></svg>
        <svg viewBox="0 0 20 20"><path d="M14 3v14l-9-7z" fill="#999"/></svg>
        <svg viewBox="0 0 20 20"><path d="M4 4h12l-4 6v7H9v-7z" fill="#668cf0" stroke="#152454"/><path d="M18 14v4h-4z"/></svg>
        <svg viewBox="0 0 20 20"><path d="M5 4h7l3 3v10H5z" fill="#999"/><path d="M18 14v4h-4z" fill="#aaa"/></svg>
        <svg viewBox="0 0 20 20"><path d="M4 17L13 6" stroke="#000" stroke-width="3"/><path d="M4 16l5-6" stroke="#355ac5"/><path d="M7 4q6-2 10 5l-2 1-3-4z" fill="#999" stroke="#111"/><path d="M18 14v4h-4z"/></svg>
        <svg viewBox="0 0 20 20"><circle cx="10" cy="10" r="6.800" fill="#3158d9" stroke="#93a8ec" stroke-width=".6"/><path d="M7.500 8q0-2 2.500-2 3 0 2.500 2-.5 1.500-2 2v2M10 14v1.500" fill="none" stroke="#fff" stroke-width="1.500"/></svg>
      </div>
      <div class="list">
        <div class="hrow"><span>Layer</span><span></span><span>On</span><span>Lock</span></div>
        <div class="row d0 hl"><span><svg class="cv"><use href="#chev"/></svg>RobotWorkcell</span><svg class="i"><use href="#bulb"/></svg><svg class="i"><use href="#lock"/></svg></div>
        <div class="row d1"><span><svg class="cv"><use href="#chev"/></svg>URRelated</span><svg class="i"><use href="#bulb"/></svg><svg class="i"><use href="#lock"/></svg></div>
        <div class="row d2"><span>URSteelPlate_For...</span><svg class="i"><use href="#bulb"/></svg><svg class="i"><use href="#lock"/></svg></div>
        <div class="row d1"><span><svg class="cv"><use href="#chev"/></svg>FixedAsset</span><svg class="i"><use href="#bulb"/></svg><svg class="i"><use href="#lock"/></svg></div>
        <div class="row d2"><span>SteelTop</span><svg class="i"><use href="#bulb"/></svg><svg class="i"><use href="#lock"/></svg></div>
        <div class="row d2"><span><svg class="cv"><use href="#chev"/></svg>SteelFrames</span><svg class="i"><use href="#bulb"/></svg><svg class="i"><use href="#lock"/></svg></div>
        <div class="row d3"><span>Brackets</span><svg class="i"><use href="#bulb"/></svg><svg class="i"><use href="#lock"/></svg></div>
        <div class="row d2"><span>PlywodBase</span><svg class="i"><use href="#bulb"/></svg><svg class="i"><use href="#lock"/></svg></div>
        <div class="row d2"><span>Castors</span><svg class="i"><use href="#bulb"/></svg><svg class="i"><use href="#lock"/></svg></div>
        <div class="row d0 cur"><span>EndEffector</span><svg class="ck" viewBox="0 0 14 12"><path d="M1 7l4 3.500L13 2" fill="none" stroke="#111" stroke-width="1.700"/></svg></div>
        <div class="hscroll"><i></i></div>
      </div>
      <svg class="mark" width="396" height="40" viewBox="0 0 396 40"><g fill="none" stroke-width="3" stroke-dasharray="15.700 4.300"><rect x="4.500" y="5" width="388" height="32" rx="15" stroke="#0004"/><rect x="3.500" y="4" width="388" height="32" rx="15" stroke="#fb4e50"/></g></svg>
    </section>
  </main>

  <div class="osnap">
    <i class="grip"></i>
    <span class="c">End</span><span class="c">Near</span><span class="c">Point</span><span class="c">Mid</span><span class="c">Cen</span><span class="c">Int</span><span class="c">Perp</span><span class="c">Tan</span><span class="c">Quad</span><span class="c">Knot</span><span class="c">Vertex</span><span>Project</span><span>Disable</span>
  </div>
  <footer><span>CPlane</span><span>x -20.96</span><span>y -166.73</span><span>z</span><span>Millimeters</span><span class="lay"><i></i>EndEffector</span><span>Grid Snap</span><b>Ortho</b><b>Planar</b><b>Osnap</b><b>SmartTrack</b><b>Gumball</b><span>Record History</span><span>Filter</span><span class="cut">C</span></footer>
</div>
</body>
</html>
```
FILE: styles.css
```css
* { box-sizing: border-box; }
body { margin: 0; background: #00b7c4; font: 11.500px/16px "Noto Sans", sans-serif; letter-spacing: -.1px; overflow: hidden; }
svg { display: block; flex: none; }
.defs { position: absolute; }
em { font-style: normal; color: #7fdcca; }
.window { width: 958px; height: 1030px; display: flex; flex-direction: column; background: #232323; color: #7ed0bd; }

.title { height: 30px; flex: none; background: #00b7c4; color: #08181a; display: flex; align-items: center; padding: 0 10px 2px 8px; }
.caption { flex: 1; padding-left: 5px; white-space: nowrap; letter-spacing: -.04px; padding-top: 1px; }
.menu { height: 20px; flex: none; background: #fff; border-bottom: 2px solid #f0f0f0; color: #000; padding: 1px 0 0 7px; display: grid; grid-template-columns: 32px 34px 39px 45px 53px 42px 40px 43px 71px 68px 42px 55px 51px 48px 76px 40px; line-height: 17px; }

.grip { width: 3px; border: solid #8b8d99; border-width: 0 1px; flex: none; margin-left: 3px; }
.ribbon { height: 58px; flex: none; display: flex; padding-top: 4px; border-bottom: 1px solid #707070; gap: 1px; }
.ribbon .grip { height: 52px; }
.ribbon-body { width: 951px; }
.tabs { height: 17px; display: grid; grid-template-columns: 69px 63px 64px 53px 58px 107px 66px 75px 83px 91px 77px 80px 33px 17px 14px; border-bottom: 1px solid #b9bfdc; }
.tabs > span { background: #5b5b5b; clip-path: polygon(0 100%, 0 50%, 7px 0, calc(100% - 2px) 0, 100% 3px, 100% 100%); padding-left: 10px; white-space: nowrap; line-height: 18px; height: 16px; color: #78c8b6; font-size: 11.800px; letter-spacing: -.15px; }
.tabs > .sel { clip-path: none; background: none; padding: 0; display: grid; height: 17px; }
.sel > * { grid-area: 1/1; font-weight: 400; }
.tabs .sel b { padding-left: 16px; z-index: 1; }
.tabs em { background: #b8b8b8; border: 1px solid #c5cae5; text-align: center; line-height: 12px; font-size: 15px; color: #7fe0cc; }
.gear { margin: 0 0 0 -1px; }
.tools { display: flex; background: linear-gradient(#4a4a4a, #252525); height: 36px; }
.tools > svg { width: 28px; height: 28px; }
.ribbon .tools { padding-top: 1px; }
.vsep { width: 2px; height: 26px; background: linear-gradient(90deg, #3b7166 50%, #1b1b1b 50%); margin: 1px 1px 0 2px; flex: none; }
.ribbon .vsep { margin: 1px 1px 0 3px; }
.tools em { font-size: 17px; line-height: 24px; padding-left: 3px; }

.command { height: 114px; flex: none; display: grid; grid-template: 88px 20px / 7px 933px 17px; padding-top: 3px; border-bottom: 1px solid #707070; font: 12px/15px "Liberation Sans", sans-serif; letter-spacing: .2px; color: #fff; }
.command .grip { grid-row: 1 / 3; height: 108px; }
.history { background: #696969; padding: 0 1px; overflow: hidden; }
.history p { margin: 0; position: relative; top: -1px; white-space: nowrap; height: 15px; }
.track { background: #f0f0f0; border-left: 1px solid #fff; padding: 53px 0 0 7px; }
.track i { display: block; width: 2px; height: 17px; background: #858585; }
.prompt { background: #696969; border-top: 1px solid #b9bbd8; font-weight: 700; padding: 1px; letter-spacing: 0; height: 19px; grid-column: 2; }
.spin { background: #eee; border-top: 1px solid #b9bbd8; padding-left: 2px; height: 19px; }

.toolbar2 { height: 43px; flex: none; display: flex; padding-top: 3px; gap: 1px; }
.toolbar2 .grip { height: 35px; margin-top: 1px; }
.toolbar2 .tools { width: 951px; height: 37px; padding-top: 1px; background: linear-gradient(#5b5b5b, #242424); }

main { display: flex; height: 723px; flex: none; }
.left { width: 41px; display: flex; flex-direction: column; }
.left > svg { width: 28px; height: 28px; }
.left em { margin: 5px 0 0 16px; font-size: 16px; }
.hgrip { height: 3px; width: 32px; border: solid #8b8d99; border-width: 1px 0; margin: 3px 0 1px 3px; flex: none; }
.ln { fill: none; stroke: #050505; stroke-width: 1.200; }
.thick { stroke-width: 2; }
.view { width: 542px; }
.canvas { width: 535px; height: 698px; border: 1px solid #bcc0dc; background: #fff; display: grid; }
.canvas > * { grid-area: 1/1; }
.vlabel { width: 67px; height: 18px; background: #00505a; display: flex; z-index: 1; clip-path: polygon(0 0,100% 0,100% 85%,95% 100%,0 100%); color: #7fdcca; }
.vlabel b { width: 56px; padding-left: 8px; line-height: 18px; font-size: 11.500px; }
.axis { font: 14px "Noto Sans", sans-serif; fill: #666; }
.vtabs { display: flex; height: 20px; padding-top: 1px; }
.vtabs span { width: 43px; height: 18px; line-height: 19px; background: #575757; clip-path: polygon(0 0,100% 0,100% 90%,97% 100%,8px 100%,0 30%); padding-left: 10px; font-size: 11.700px; letter-spacing: -.15px; }
.vtabs span:nth-child(2) { width: 35px; }
.vtabs .sel { width: 53px; padding: 0; background: none; clip-path: none; display: grid; }
.vtabs .sel b { padding-left: 10px; z-index: 1; }
.vtabs strong { font-size: 16px; margin-left: 9px; color: #d5fff4; line-height: 18px; font-weight: 900; }

.panel { width: 374px; position: relative; }
.panel h2 { margin: 0; font: inherit; height: 20px; line-height: 19px; padding: 2px 0 0 3px; display: flex; gap: 4px; font-size: 11.500px; }
.panel h2 i { flex: 1; height: 3px; border: solid #8b8d99; border-width: 1px 0; margin-top: 7px; }
.ptabs { display: flex; height: 21px; border-bottom: 1px solid #bcc0dc; overflow: hidden; }
.ptabs span { flex: none; width: 32px; height: 20px; border: 1px solid #858585; border-width: 1px 1px 0 0; background: #505050; padding-left: 5px; }
.ptabs span svg, .pgear { width: 20px; height: 20px; }
.ptabs .on { border-color: #bcc0dc; border-left-width: 1px; background: #5e5e5e; height: 21px; padding-left: 4px; }
.pgear { margin: 2px 0 0 5px; }
.ptools { height: 34px; background: #5e5e5e; padding: 8px 0 0 6px; display: flex; gap: 3px; border-left: 1px solid #bcc0dc; }
.ptools svg { width: 20px; height: 20px; margin-right: -.2px; }
.list { height: 641px; background: #fff; border: solid #bcc0dc; border-width: 1px 0 1px 1px; width: 373px; border-right: 2px solid #5e5e5e; position: relative; font-size: 11.800px; letter-spacing: -.15px; }
.hrow { display: grid; grid-template-columns: 161px 17px 79px 1fr; height: 23px; line-height: 22px; text-align: center; }
.hrow span { border-right: 1px solid #777; }
.hrow span:first-child { text-align: left; padding-left: 5px; }
.hrow span:last-child { border: 0; padding-left: 7px; }
.row { height: 19px; border-bottom: 1px solid #eee; display: grid; grid-template-columns: 209px 100px 1fr; line-height: 20px; color: #7fd1bd; }
.row span { padding-left: 23px; white-space: nowrap; display: block; height: 18px; }
.d1 span { padding-left: 39px; } .d2 span { padding-left: 55px; } .d3 span { padding-left: 71px; }
.cv { width: 12px; height: 12px; float: left; margin: 3px 4px 0 -16px; }
.row .i { width: 16px; height: 17px; margin-top: 1px; }
.row .i + .i { margin: 2px 0 0 1px; height: 16px; }
.hl { background: #849df0; border-color: #849df0; }
.hl .i { filter: drop-shadow(0 0 .7px #fff) drop-shadow(0 0 .5px #fff); }
.cur { font-weight: 700; grid-template-columns: 162px 20px; color: #72cdb8; font-size: 11.500px; }
.ck { width: 14px; height: 12px; margin-top: 4px; }
.hscroll { position: absolute; left: 0; right: 0; bottom: 0; height: 16px; background: #f0f0f0; padding: 7px 0 0 17px; }
.hscroll i { display: block; width: 205px; height: 2px; background: #858585; }
.mark { position: absolute; left: -22px; top: 259px; }

.osnap { height: 23px; flex: none; display: grid; grid-template-columns: 9px 43px 48px 51px 44px 44px 37px 47px 43px 52px 48px 55px 69px 70px; line-height: 23px; font-size: 11.800px; letter-spacing: -.15px; }
.osnap .grip { height: 18px; margin-top: 2px; }
.osnap span { display: flex; align-items: center; gap: 4px; white-space: nowrap; }
.osnap span::before { content: ""; width: 12px; height: 12px; border-radius: 5px; background: #fff; flex: none; }
.osnap .c::before { content: "✓"; color: #fff; background: #0861b9; border-radius: 3px; font: 9.500px/12px "DejaVu Sans", sans-serif; text-align: center; }

footer { height: 19px; flex: none; border-top: 1px solid #b9bbd8; display: grid; grid-template-columns: 47px 77px 77px 77px 77px 147px 61px 39px 44px 45px 68px 53px 83px 37px 7px 1fr; line-height: 18px; text-align: center; font-size: 11.800px; letter-spacing: -.2px; white-space: nowrap; }
footer span { border-right: 1px solid #b9bbd8; }
footer b { background: #ccd6ef; color: #000; border: solid #232323; border-width: 0 1px; letter-spacing: -.4px; }
footer .lay { text-align: left; display: flex; padding: 0 3px; gap: 2px; }
.lay i { width: 14px; height: 14px; background: #000; border: 1px solid #7fdcca; margin-top: 2px; }
.cut { overflow: hidden; }
```
